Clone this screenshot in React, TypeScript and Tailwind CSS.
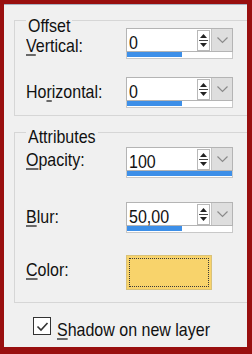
const font = { fontFamily: '"Liberation Sans", Arial, sans-serif' };

// tall, narrow text like the stretched dialog font
const Txt = ({ children }: { children: React.ReactNode }) => (
  <span className="inline-block scale-y-[1.2] text-[16px] leading-[18px] text-[#111]">{children}</span>
);

const Spinner = () => (
  <svg width="13" height="21" viewBox="0 0 13 21" className="shrink-0 self-center">
    <rect x="0.5" y="0.5" width="12" height="20" fill="#fff" stroke="#b8b8b8" />
    <path d="M6.5 4 L10 8 L3 8 Z" fill="#222" />
    <line x1="2" y1="10.5" x2="11" y2="10.5" stroke="#444" />
    <path d="M3 13 L10 13 L6.5 17 Z" fill="#222" />
  </svg>
);

const Chevron = () => (
  <svg width="11" height="7" viewBox="0 0 11 7">
    <path d="M0.5 0.5 L5.5 5.5 L10.5 0.5" fill="none" stroke="#8a8a8a" strokeWidth="1.2" />
  </svg>
);

const NumInput = ({ value, fill }: { value: string; fill: string }) => (
  <div className="flex w-[107px] flex-col">
    <div className="flex h-[24px] border border-[#b4b4b4] bg-white">
      <div className="flex-1 pl-[2px] pt-[2px]">
        <Txt>{value}</Txt>
      </div>
      <Spinner />
      <div className="ml-[1px] flex w-[21px] items-center justify-center border-l border-[#c4c4c4] bg-[#dedede]">
        <Chevron />
      </div>
    </div>
    <div className="h-[7px] border-x border-b border-[#c8c8c8] bg-white">
      <div className={`h-[5px] bg-[#3d8fe8] ${fill}`} />
    </div>
  </div>
);

const Label = ({ pre, u, post }: { pre?: string; u: string; post: string }) => (
  <Txt>
    {pre}
    <span className="underline underline-offset-2">{u}</span>
    {post}
  </Txt>
);

export default function App() {
  return (
    <div style={font} className="h-[354px] w-[252px] bg-[#990f0f] pb-[7px] pl-[4px] pr-[5px] pt-[4px]">
      <div className="h-full overflow-hidden border-t border-[#a9b1c1] bg-[#f0f0f0] pt-[15px]">
        {/* Offset */}
        <div className="relative ml-[10px] h-[96px] w-[260px] border border-[#d6d6d6] pl-[11px] pt-[7px]">
          <div className="absolute left-[11px] top-[-7px] bg-[#f0f0f0] px-[2px]">
            <Txt>Offset</Txt>
          </div>
          <div className="flex">
            <div className="w-[100px] pt-[6px]">
              <Label u="V" post="ertical:" />
            </div>
            <NumInput value="0" fill="w-[55px]" />
          </div>
          <div className="mt-[18px] flex">
            <div className="w-[100px] pt-[3px]">
              <Label pre="Ho" u="r" post="izontal:" />
            </div>
            <NumInput value="0" fill="w-[55px]" />
          </div>
        </div>

        {/* Attributes */}
        <div className="relative ml-[10px] mt-[16px] h-[171px] w-[260px] border border-[#d6d6d6] pl-[11px] pt-[14px]">
          <div className="absolute left-[11px] top-[-8px] bg-[#f0f0f0] px-[2px]">
            <Txt>Attributes</Txt>
          </div>
          <div className="flex">
            <div className="w-[100px] pt-[1px]">
              <Label u="O" post="pacity:" />
            </div>
            <NumInput value="100" fill="w-full" />
          </div>
          <div className="mt-[24px] flex">
            <div className="w-[100px] pt-[3px]">
              <Label u="B" post="lur:" />
            </div>
            <NumInput value="50,00" fill="w-[55px]" />
          </div>
          <div className="mt-[22px] flex">
            <div className="w-[100px] pt-[3px]">
              <Label u="C" post="olor:" />
            </div>
            <div className="h-[35px] w-[86px] border border-[#d9c27a] bg-[#f8d36b] p-[2px]">
              <div className="h-full w-full border border-dotted border-[#3a3a3a]" />
            </div>
          </div>
        </div>

        {/* checkbox */}
        <div className="ml-[29px] mt-[14px] flex items-start gap-[6px]">
          <div className="flex h-[18px] w-[18px] items-center justify-center border border-[#333] bg-white">
            <svg width="13" height="11" viewBox="0 0 13 11">
              <path d="M1.5 5.5 L5 9 L11.5 2" fill="none" stroke="#333" strokeWidth="1.6" />
            </svg>
          </div>
          <div className="pt-[1px]">
            <Label u="S" post="hadow on new layer" />
          </div>
        </div>
      </div>
    </div>
  );
}
